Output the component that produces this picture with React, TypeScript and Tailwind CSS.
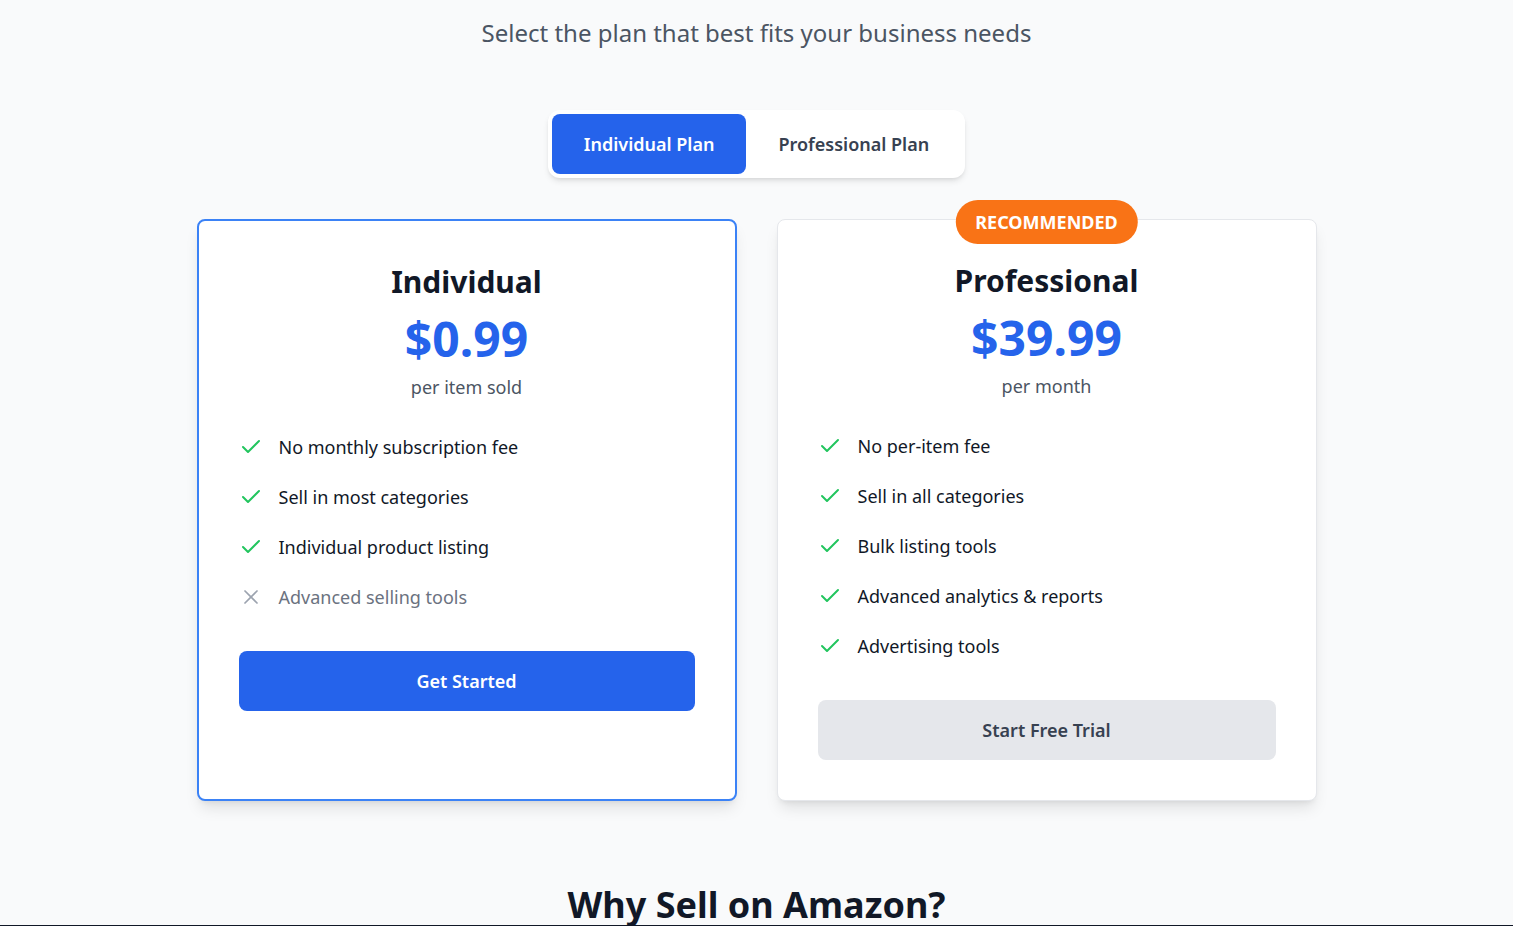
import { Check, X } from "lucide-react";

type Feature = { label: string; included: boolean };

const individualFeatures: Feature[] = [
  { label: "No monthly subscription fee", included: true },
  { label: "Sell in most categories", included: true },
  { label: "Individual product listing", included: true },
  { label: "Advanced selling tools", included: false },
];

const professionalFeatures: Feature[] = [
  { label: "No per-item fee", included: true },
  { label: "Sell in all categories", included: true },
  { label: "Bulk listing tools", included: true },
  { label: "Advanced analytics & reports", included: true },
  { label: "Advertising tools", included: true },
];

const FeatureList = ({ items }: { items: Feature[] }) => (
  <ul className="mb-10 flex flex-col gap-[22px]">
    {items.map((f) => (
      <li key={f.label} className="flex items-center text-lg">
        {f.included ? (
          <Check className="mr-4 h-6 w-6 shrink-0 text-[#22c55e]" strokeWidth={2} />
        ) : (
          <X className="mr-4 h-6 w-6 shrink-0 text-[#9ca3af]" strokeWidth={1.75} />
        )}
        <span className={f.included ? "text-[#111827]" : "text-[#6b7280]"}>{f.label}</span>
      </li>
    ))}
  </ul>
);

export default function App() {
  return (
    <div
      className="flex h-[926px] flex-col overflow-hidden bg-[#f9fafb]"
      style={{ fontFamily: '"Noto Sans", "Open Sans", sans-serif' }}
    >
      <p className="pt-[17px] text-center text-2xl text-[#4b5563]">
        Select the plan that best fits your business needs
      </p>

      {/* plan toggle */}
      <div className="mt-[61px] flex justify-center">
        <div className="flex rounded-xl bg-white p-1 shadow-md">
          <button className="rounded-lg bg-[#2563eb] px-8 py-4 text-lg font-semibold leading-7 text-white">
            Individual Plan
          </button>
          <button className="rounded-lg px-8 py-4 text-lg font-semibold leading-7 text-[#374151]">
            Professional Plan
          </button>
        </div>
      </div>

      {/* cards */}
      <div className="mx-auto mt-[41px] w-full max-w-6xl px-4">
        <div className="grid grid-cols-2 gap-10">
          <div className="rounded-lg border-2 border-[#3b82f6] bg-white px-10 pb-10 pt-[43px] shadow-lg">
            <div className="mb-8 text-center">
              <h3 className="mb-[15px] text-3xl font-bold text-[#111827]">Individual</h3>
              <div className="text-5xl font-bold text-[#2563eb]">$0.99</div>
              <p className="mt-2.5 text-lg text-[#4b5563]">per item sold</p>
            </div>
            <FeatureList items={individualFeatures} />
            <button className="w-full rounded-lg bg-[#2563eb] py-4 text-lg font-semibold leading-7 text-white">
              Get Started
            </button>
          </div>

          <div className="relative rounded-lg border border-[#e5e7eb] bg-white px-10 pb-10 pt-[43px] shadow-lg">
            <span className="absolute -top-5 left-1/2 -translate-x-1/2 rounded-full bg-[#f97316] px-5 py-2 text-lg font-bold leading-7 text-white">
              RECOMMENDED
            </span>
            <div className="mb-8 text-center">
              <h3 className="mb-[15px] text-3xl font-bold text-[#111827]">Professional</h3>
              <div className="text-5xl font-bold text-[#2563eb]">$39.99</div>
              <p className="mt-2.5 text-lg text-[#4b5563]">per month</p>
            </div>
            <FeatureList items={professionalFeatures} />
            <button className="w-full rounded-lg bg-[#e5e7eb] py-4 text-lg font-semibold leading-7 text-[#374151]">
              Start Free Trial
            </button>
          </div>
        </div>
      </div>

      <h2 className="mt-[84px] text-center text-4xl font-bold text-[#111827]">Why Sell on Amazon?</h2>
      <div className="mt-auto h-px bg-[#111827]" />
    </div>
  );
}
